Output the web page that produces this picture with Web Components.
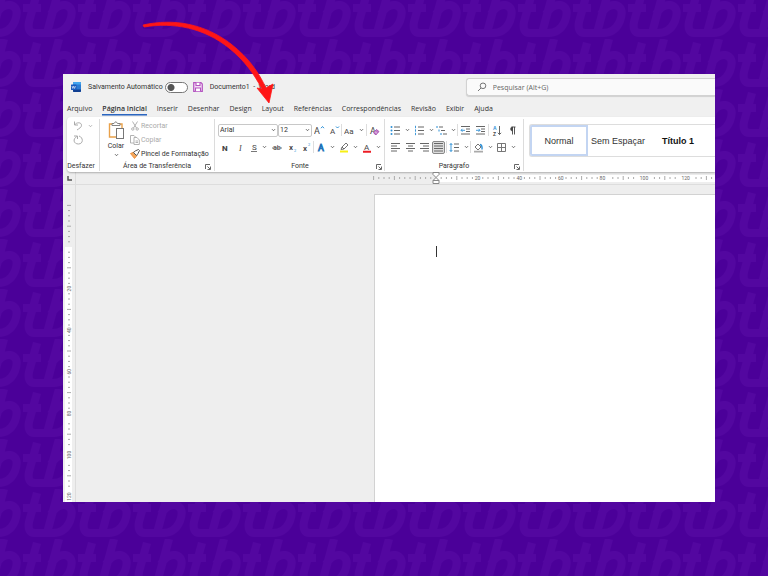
<!DOCTYPE html>
<html lang="pt-BR">
<head>
<meta charset="utf-8">
<title>Documento1 - Word</title>
<style>
html,body{height:100%;margin:0}
body{font-family:Roboto,"Noto Sans",sans-serif;font-size:7px;color:#333}
</style>
</head>
<body>
<word-scene></word-scene>

<script>
const base = `*{box-sizing:border-box}
button,input,a{font:inherit;color:inherit}
button{border:0;background:none;padding:0;margin:0;display:flex;align-items:center;justify-content:center}
svg{display:block;flex:none}`;
function define(name, render, ready) {
  customElements.define(name, class extends HTMLElement {
    connectedCallback() {
      if (this.shadowRoot) return;
      const root = this.attachShadow({mode: 'open'});
      const t = document.createElement('template');
      t.innerHTML = render(this);
      root.append(t.content.cloneNode(true));
      if (ready) ready(this, root);
    }
  });
}

const lines = rows => rows.map(([a, b, y]) => `<path d="M${a} ${y}H${b}" stroke="#666" stroke-width="1"/>`).join('');
const blue = '#2b8fd6';
const T = (x, y, s, size, extra = '') => `<text x="${x}" y="${y}" font-size="${size}" ${extra}>${s}</text>`;
const icons = {
  undo: [12, 12, '<path d="M2.500 1.500V5H6M2.500 5C4.500 2 9.500 2 9.500 5.300 9.500 7.500 7 8.500 5 10" fill="none" stroke="#aaa"/>'],
  redo: [12, 12, '<path d="M2 2H5.500V5M7 2C11.500 3.500 11.500 9.800 6.500 10 1.500 10 .500 5 4.800 2.500" fill="none" stroke="#aaa"/>'],
  paste: [17, 19, '<path d="M12 3H14V7M8 16H1.500V3H4" fill="none" stroke="#e9a14a" stroke-width="1.400"/><path d="M4 4.500V2.500H6Q7.800-.800 9.500 2.500H12V4.500Z" fill="#fff" stroke="#777" stroke-width=".9"/><rect x="8.500" y="7.500" width="7" height="10" fill="#fff" stroke="#777"/>'],
  cut: [10, 10, '<g fill="none" stroke="#aaa" stroke-width=".9"><path d="M2.500 .500 6.500 7M7.500 .500 3.500 7"/><circle cx="2.800" cy="8" r="1.200"/><circle cx="7.200" cy="8" r="1.200"/></g>'],
  copy: [10, 10, '<g fill="#fff" stroke="#aaa" stroke-width=".9"><path d="M4 8H.500V.500H4L6 2.500"/><path d="M4 2.500H7L9.300 5V9.500H4Z"/><path d="M5.500 6H8M5.500 7.500H8"/></g>'],
  brush: [10, 10, '<path d="M.500 4.500 4 3 7 6.500 4.500 9.500Z" fill="#f6a85c" stroke="#e88530" stroke-width=".8"/><path d="M3.500 3.500 6.500 6.500 8 4.500 9.500 1.500 8.500.500 5.500 1.800Z" fill="#fff" stroke="#555" stroke-width="1"/>'],
  grow: [11, 11, T(0, 9, 'A', 9) + `<path d="M7 3.200 8.500 1.500 10 3.200" fill="none" stroke="${blue}"/>`],
  shrink: [11, 11, T(1, 9, 'A', 8) + `<path d="M7 1.500 8.500 3 10 1.500" fill="none" stroke="${blue}"/>`],
  case: [11, 11, T(0, 9, 'Aa', 8)],
  clear: [11, 11, T(1, 9, 'A', 9) + '<path d="M4.500 7.500 7.500 4.500 10 6.500 7.500 9.500H6Z" fill="#c37ac9" stroke="#993fa3" stroke-width=".7"/><path d="m6 6.500 2 2" stroke="#fff" stroke-width=".7"/>'],
  bold: [10, 11, T(2, 9, 'N', 8, 'font-weight="800"')],
  italic: [10, 11, T(4, 9, 'I', 8, 'font-style="italic" font-family="Liberation Serif"')],
  under: [8, 11, T(2, 8, 'S', 8) + '<path d="M1 9.500H7" stroke="#555" stroke-width=".8"/>'],
  strike: [11, 11, T(2, 8, 'ab', 7) + '<path d="M1 6H11" stroke="#555" stroke-width=".8"/>'],
  sub: [10, 11, T(2, 8, 'x', 8, 'font-weight="600"') + T(7, 10, '2', 4, `fill="${blue}"`)],
  sup: [10, 11, T(2, 9, 'x', 8, 'font-weight="600"') + T(7, 4, '2', 4, `fill="${blue}"`)],
  effects: [10, 11, T(2, 9, 'A', 9, 'fill="#9bd0f5" stroke="#2173b8" stroke-width=".9"')],
  marker: [10, 11, '<path d="M1 9.500H9" stroke="#f7ef16" stroke-width="2.200"/><path d="M2 7.500 3 5 7 1 9 3 5 7Z" fill="#fff" stroke="#666" stroke-width=".9"/><path d="M3 5 5 7" stroke="#666"/>'],
  color: [10, 11, T(2, 8, 'A', 8) + '<path d="M1 9.700H9" stroke="#ec1c24" stroke-width="2"/>'],
  bullets: [11, 11, lines([[4, 10, 2], [4, 10, 5.5], [4, 10, 9]]) + [2, 5.5, 9].map(y => `<circle cx="1.500" cy="${y}" r="1" fill="${blue}"/>`).join('')],
  numbers: [11, 11, lines([[4, 10, 2], [4, 10, 5.5], [4, 10, 9]]) + [2, 5.5, 9].map(y => `<path d="M1.500 ${y - 1.2}v2.400" stroke="${blue}" stroke-width=".9"/>`).join('')],
  levels: [11, 11, lines([[3, 7, 2], [5, 9, 5.5], [7, 11, 9]]) + [[1, 2], [3, 5.5], [5, 9]].map(([x, y]) => `<path d="M${x} ${y - 1}v2" stroke="${blue}"/>`).join('')],
  outdent: [11, 11, lines([[1, 10, 1.5], [6, 10, 4], [6, 10, 6.5], [1, 10, 9]]) + `<path d="M5 5.300H1M2.500 3.800 1 5.300 2.500 6.800" fill="none" stroke="${blue}" stroke-width=".9"/>`],
  indent: [11, 11, lines([[1, 10, 1.5], [6, 10, 4], [6, 10, 6.5], [1, 10, 9]]) + `<path d="M1 5.300H5M3.500 3.800 5 5.300 3.500 6.800" fill="none" stroke="${blue}" stroke-width=".9"/>`],
  sort: [10, 11, T(1, 5, 'A', 5, `font-family="Liberation Sans" font-weight="bold" fill="${blue}"`) + T(1, 11, 'Z', 5, 'font-family="Liberation Sans" font-weight="bold"') + '<path d="M7.500 1V9.500M5.800 7.800 7.500 9.500 9.200 7.800" fill="none" stroke="#555" stroke-width=".9"/>'],
  pilcrow: [10, 11, '<path d="M8.500 2H4.500M5.500 2V9.500M7.500 2V9.500" stroke="#444" stroke-width=".9"/><path d="M5.500 2a2 2 0 0 0 0 4Z" fill="#444" stroke="#444" stroke-width=".5"/>'],
  left: [11, 11, lines([[1, 10, 1.5], [1, 7, 4], [1, 10, 6.5], [1, 7, 9]])],
  center: [11, 11, lines([[1, 10, 1.5], [3, 8, 4], [1, 10, 6.5], [3, 8, 9]])],
  right: [11, 11, lines([[1, 10, 1.5], [4, 10, 4], [1, 10, 6.5], [4, 10, 9]])],
  justify: [11, 11, lines([[1, 10, 1.5], [1, 10, 4], [1, 10, 6.5], [1, 10, 9]])],
  spacing: [11, 11, lines([[5, 10, 2], [5, 10, 5.5], [5, 10, 9]]) + `<path d="M2 1.500V9.500M.700 3 2 1.500 3.300 3M.700 8 2 9.500 3.300 8" fill="none" stroke="${blue}" stroke-width=".9"/>`],
  fill: [11, 11, `<path d="M1 9.700H10" stroke="#aaa" stroke-width="1.700"/><path d="M2 5 5 2 8 5 5 8Z" fill="#fff" stroke="#666" stroke-width=".9"/><path d="M7 2.500Q9.500 3 9 7.500" fill="none" stroke="${blue}" stroke-width="1.400"/>`],
  borders: [11, 11, '<path d="M1.500 1.500H9.500V9.500H1.500ZM5.500 1.500V9.500M1.500 5.500H9.500" fill="none" stroke="#777"/>'],
  chev: [5, 4, '<path d="M1 1.200 2.500 2.700 4 1.200" fill="none" stroke="#555" stroke-width=".9"/>'],
  launch: [6, 6, '<path d="M.500 5V.500H5M2.500 2.500 5 5M5.500 2.500V5.500H2.500" fill="none" stroke="#555" stroke-width=".9"/>'],
  save: [10, 10, '<path d="M.700.700H8L9.300 2V9.300H.700Z" fill="#f3dcf5" stroke="#b455c0" stroke-width="1.200"/><path d="M3 .700V3.500H7V.700M2.500 9.300V6H7.500V9.300" fill="#fff" stroke="#b455c0" stroke-width="1.100"/>'],
  search: [10, 10, '<circle cx="6" cy="3.800" r="2.800" fill="none" stroke="#666" stroke-width=".9"/><path d="M4 6 1 9" stroke="#666" stroke-width=".9"/>'],
  logo: [10, 10, '<rect x="2" y="0" width="8" height="10" rx="1" fill="#2b7cd3"/><path d="M2 1a1 1 0 0 1 1-1H9a1 1 0 0 1 1 1V2.500H2Z" fill="#41a5ee"/><path d="M2 7.500H10V9a1 1 0 0 1-1 1H3a1 1 0 0 1-1-1Z" fill="#103f91"/><rect y="2.500" width="5.500" height="5.500" rx=".5" fill="#185abd"/><path d="M1 4 1.800 6.500 2.700 4.200 3.600 6.500 4.500 4" fill="none" stroke="#fff" stroke-width=".6"/>']
};
define('ui-icon', el => {
  const [w, h, body] = icons[el.getAttribute('name')];
  return `<style>${base}:host{display:block;flex:none}svg{fill:#444}</style>
  <svg width="${w}" height="${h}" viewBox="0 0 ${w} ${h}" aria-hidden="true">${body}</svg>`;
});

define('ui-tool', el => `<style>${base}
:host{display:block;flex:none}
button{width:100%;height:14px;gap:4px}
:host([on]) button{width:13px;height:13px;background:#ddd;border:1px solid #888;border-radius:2px}
</style><button aria-label="${el.getAttribute('label')}"><ui-icon name="${el.getAttribute('icon')}"></ui-icon>${el.hasAttribute('menu') ? '<ui-icon name="chev"></ui-icon>' : ''}</button>`);

const tool = (w, icon, label, flags = '') => `<ui-tool style="width:${w}px" icon="${icon}" label="${label}" ${flags}></ui-tool>`;
const sep = '<i class="sep"></i>';

define('ui-combo', el => `<style>${base}
:host{display:flex;align-items:center;height:13px;border:1px solid #c8c8c8;border-radius:2px;background:#fff;padding-right:1px}
input{flex:1;min-width:0;width:0;border:0;padding:0 1px;background:none;height:11px;outline:0}
</style><input value="${el.getAttribute('value')}" aria-label="${el.getAttribute('label')}"><ui-icon name="chev"></ui-icon>`);

define('ribbon-group', el => `<style>${base}
:host{display:grid;grid-template-rows:1fr 9px;border-right:1px solid #dcdcdc;padding:0 3px;margin:2px 0 1px;flex:none}
:host([plain]){padding-inline:0}
:host(:last-of-type){border:0}
.foot{display:grid;grid-template-columns:6px 1fr 6px;align-items:center;text-align:center;line-height:9px;white-space:nowrap}
.foot span{grid-column:2;justify-self:center}
:host([plain]) .foot{grid-template-columns:0 1fr 4px}
</style><slot></slot><div class="foot"><span>${el.getAttribute('label') || ''}</span>${el.hasAttribute('launch') ? `<button aria-label="Mais opções"><ui-icon name="launch"></ui-icon></button>` : ''}</div>`);

define('word-ribbon', () => `<style>${base}
:host{display:flex;flex:none;height:55px;margin-left:4px;background:#fff;border-radius:4px 0 0 4px;box-shadow:0 1px 2px #0004;overflow:hidden;position:relative}
.rows{display:grid;grid-template-rows:14px 14px;row-gap:3px;align-content:start;padding-top:4px}
.row{display:flex;align-items:center}
.sep{width:1px;height:12px;background:#ddd;flex:none}
.undo{width:33px}.clip{width:115px}.font{width:170px}.para{width:139px}.styles{flex:1;min-width:0;padding-right:0}
.history{display:grid;grid-template-rows:14px 14px;justify-content:center;align-content:start}
.history .row{gap:4px;width:22px}
.faint{opacity:.5}
.paste{display:grid;grid-template-columns:26px 1fr;gap:1px}
.big{flex-direction:column;justify-content:start;line-height:9px;gap:2px;padding-top:2px}
.list{display:grid;grid-auto-rows:14px;align-content:start}
.list button{justify-content:start;gap:1px;white-space:nowrap}
.list button:disabled{color:#aaa}
.gallery{display:flex;border:1px solid #ddd;border-right:0;margin:5px 0 0 2px;height:33px;border-radius:3px 0 0 3px;font:9px "Liberation Sans",sans-serif;align-items:stretch;overflow:hidden}
.gallery button{width:60px;white-space:nowrap;flex:none}
.gallery button.on{border:2px solid #c3d5f2;width:58px}
.gallery button:last-child{font-weight:bold;color:#111}
</style>
<ribbon-group class="undo" label="Desfazer" plain><div class="history">
 <div class="row"><button aria-label="Desfazer"><ui-icon name="undo"></ui-icon></button><ui-icon class="faint" name="chev"></ui-icon></div>
 <div class="row"><button aria-label="Refazer"><ui-icon name="redo"></ui-icon></button></div></div></ribbon-group>
<ribbon-group class="clip" label="Área de Transferência" launch><div class="paste">
 <button class="big"><ui-icon name="paste"></ui-icon>Colar<ui-icon name="chev"></ui-icon></button>
 <div class="list"><button disabled><ui-icon name="cut"></ui-icon>Recortar</button><button disabled><ui-icon name="copy"></ui-icon>Copiar</button><button><ui-icon name="brush"></ui-icon>Pincel de Formatação</button></div></div></ribbon-group>
<ribbon-group class="font" label="Fonte" launch><div class="rows">
 <div class="row"><ui-combo style="width:60px" value="Arial" label="Fonte"></ui-combo><ui-combo style="width:34px" value="12" label="Tamanho"></ui-combo>
 ${tool(15, 'grow', 'Aumentar fonte')}${tool(14, 'shrink', 'Diminuir fonte')}${sep}${tool(24, 'case', 'Maiúsculas e minúsculas', 'menu')}${sep}${tool(15, 'clear', 'Limpar formatação')}</div>
 <div class="row">${tool(14, 'bold', 'Negrito')}${tool(15, 'italic', 'Itálico')}${tool(22, 'under', 'Sublinhado', 'menu')}${tool(15, 'strike', 'Tachado')}${tool(15, 'sub', 'Subscrito')}${tool(14, 'sup', 'Sobrescrito')}${sep}${tool(22, 'effects', 'Efeitos de texto', 'menu')}${tool(24, 'marker', 'Realce', 'menu')}${tool(22, 'color', 'Cor da fonte', 'menu')}</div></div></ribbon-group>
<ribbon-group class="para" label="Parágrafo" launch><div class="rows">
 <div class="row">${tool(24, 'bullets', 'Marcadores', 'menu')}${tool(23, 'numbers', 'Numeração', 'menu')}${tool(22, 'levels', 'Lista de vários níveis', 'menu')}${sep}${tool(15, 'outdent', 'Diminuir recuo')}${tool(15, 'indent', 'Aumentar recuo')}${sep}${tool(15, 'sort', 'Classificar')}${tool(16, 'pilcrow', 'Mostrar tudo')}</div>
 <div class="row">${tool(15, 'left', 'Alinhar à esquerda')}${tool(14, 'center', 'Centralizar')}${tool(15, 'right', 'Alinhar à direita')}${tool(14, 'justify', 'Justificar', 'on')}${sep}${tool(23, 'spacing', 'Espaçamento', 'menu')}${sep}${tool(23, 'fill', 'Sombreamento', 'menu')}${tool(23, 'borders', 'Bordas', 'menu')}</div></div></ribbon-group>
<ribbon-group class="styles"><div class="gallery"><button class="on">Normal</button><button>Sem Espaçar</button><button>Título 1</button></div></ribbon-group>`);

define('word-title', () => `<style>${base}
:host{display:flex;flex:none;align-items:center;height:26px;padding-left:8px;background:#f0f0f0}
label{display:flex;align-items:center;gap:2px;margin:0 5px 0 7px;white-space:nowrap}
label input{appearance:none;margin:0;width:23px;height:11px;border:1px solid #777;border-radius:6px;background:radial-gradient(circle at 5px 50%,#555 3px,#fff 4px)}
.doc{margin-left:7px;white-space:pre;width:256px}
.search{flex:1;display:flex;align-items:center;gap:6px;height:18px;padding-left:10px;border:1px solid #d2d2d2;border-right:0;border-radius:3px 0 0 3px;background:#fafafa;box-shadow:0 1px 1px #0002}
.search input{flex:1;min-width:0;border:0;background:none;padding:0;outline:0;font-family:"Open Sans",sans-serif}
.search input::placeholder{color:#666;opacity:1}
</style><ui-icon name="logo"></ui-icon><label>Salvamento Automático <input type="checkbox" role="switch"></label>
<button aria-label="Salvar"><ui-icon name="save"></ui-icon></button><span class="doc">Documento1  -  Word</span>
<div class="search"><ui-icon name="search"></ui-icon><input type="search" aria-label="Pesquisar" placeholder="Pesquisar (Alt+G)"></div>`);

define('word-tabs', () => `<style>${base}
:host{display:block;flex:none;background:#f0f0f0;height:17px;font-family:"Open Sans",sans-serif}
nav{display:flex;gap:10px;padding:3px 4px 0}
a{text-decoration:none;line-height:11px;height:12px;white-space:nowrap}
a[aria-current]{font-weight:600;border-bottom:1px solid #2b66c0;box-shadow:0 1px #2b66c088}
</style><nav>${['Arquivo', 'Página Inicial', 'Inserir', 'Desenhar', 'Design', 'Layout', 'Referências', 'Correspondências', 'Revisão', 'Exibir', 'Ajuda'].map((t, i) => `<a href="#"${i == 1 ? ' aria-current="page"' : ''}>${t}</a>`).join('')}</nav>`);

/* Ruler scale: a number every 20 mm, a tall tick every 10 mm, a short one every 2.5 mm. */
define('word-ruler', () => `<style>${base}:host{display:block;overflow:hidden;min-width:0;min-height:0;position:relative;contain:size}
  svg{width:100%;height:100%}path{stroke:#aaa;stroke-width:1;fill:none}text{font-size:5px;fill:#666;text-anchor:middle}.m{fill:#fff;stroke:#888}rect{fill:#fff}</style>
  <svg aria-hidden="true"></svg>`, (el, root) => {
  const svg = root.querySelector('svg');
  const v = el.hasAttribute('vertical'), origin = +el.getAttribute('origin'), from = +el.getAttribute('from'), step = 41.6;
  const draw = () => {
    const size = v ? el.clientHeight : el.clientWidth;
    let s = v ? `<rect x="2" y="${origin}" width="7" height="${Math.max(0, size - origin)}"/>` : `<rect x="${origin}" y="3" width="${Math.max(0, size - origin)}" height="7"/>`;
    for (let k = -12; origin + k * step / 8 < size; k++) {
      const p = origin + k * step / 8;
      if (p < from || k === 0) continue;
      if (k % 8 === 0 && k > 0) {
        if (p + 5 > size) continue;
        const n = k / 8 * 20;
        s += v ? `<text transform="translate(8 ${p}) rotate(-90)">${n}</text>` : `<text x="${p}" y="8">${n}</text>`;
      } else {
        if (k > 32 && (k % 8 === 1 || k % 8 === 7)) continue;
        const r = k % 4 === 0 ? 2 : 1;
        s += v ? `<path d="M${6 - r} ${p}h${2 * r}"/>` : `<path d="M${p} ${6 - r}v${2 * r}"/>`;
      }
    }
    if (!v) s += `<path class="m" d="M${origin - 3} .500h6v2l-3 3-3-3zM${origin - 3} 11.500v-3l3-3 3 3v3zM${origin - 3} 8.500h6"/>`;
    svg.innerHTML = s;
  };
  new ResizeObserver(draw).observe(el);
});

define('word-workspace', () => `<style>${base}
:host{display:grid;grid-template-columns:13px minmax(0,1fr);grid-template-rows:13px minmax(0,1fr);flex:1;min-height:0;background:#eee}
.corner{border-right:1px solid #ddd;border-bottom:1px solid #ddd;display:grid;place-items:center}
.h{border-bottom:1px solid #ddd}.v{border-right:1px solid #ddd}
.desk{padding:9px 0 0 298px;display:flex;min-width:0;min-height:0}
.page{flex:1;background:#fff;border:1px solid #d2d2d2;border-width:1px 0 0 1px;padding:51px 61px}
.caret{width:1px;height:11px;background:#333}
</style><div class="corner"><svg width="5" height="5"><path d="M1 0V4H5" fill="none" stroke="#555" stroke-width="1.500"/></svg></div>
<word-ruler class="h" origin="360" from="297"></word-ruler><word-ruler class="v" vertical origin="62" from="20"></word-ruler>
<div class="desk"><div class="page" role="textbox" aria-label="Documento"><div class="caret"></div></div></div>`);

define('word-window', () => `<style>${base}
:host{display:flex;flex-direction:column;min-width:0;min-height:0;background:#f0f0f0;overflow:hidden}
</style><word-title></word-title><word-tabs></word-tabs><word-ribbon></word-ribbon><word-workspace></word-workspace>`);

define('word-scene', () => {
  const mark = dx => `<g transform="translate(${dx} 0)"><path d="M14 4 6 33Q4 44 12 44H30M36 0 24 44M28 25Q34 15 42 16 52 18 47 32 42 44 30 44M0 19H18"/></g>`;
  return `<style>${base}
:host{box-sizing:border-box;display:grid;grid-template:minmax(0,1fr)/minmax(0,1fr);height:100vh;padding:74px 53px 74px 63px;background:#4b0099;position:relative;isolation:isolate}
.pattern{position:absolute;inset:0;width:100%;height:100%;z-index:-1}
.arrow{position:absolute;left:0;top:0;pointer-events:none}
</style>
<svg class="pattern" aria-hidden="true"><defs><pattern id="p" width="55" height="50" patternUnits="userSpaceOnUse" x="-32" y="-11">
<g fill="none" stroke="#5307a0" stroke-width="8" stroke-linejoin="round">${mark(0)}${mark(-55)}${mark(55)}</g></pattern></defs><rect width="100%" height="100%" fill="url(#p)"/></svg>
<word-window></word-window>
<svg class="arrow" width="290" height="110" viewBox="0 0 290 110" aria-hidden="true"><path d="M143 25C174 18 205 24 231 44 249 58 259 73 266 88L273 84 269 103 257 88 262 89C254 74 245 61 229 48 204 28 174 22 144 27Z" fill="#ff1616" stroke="#ff1616" stroke-width=".8" stroke-linejoin="round"/></svg>`;
});
</script>
</body>
</html>
